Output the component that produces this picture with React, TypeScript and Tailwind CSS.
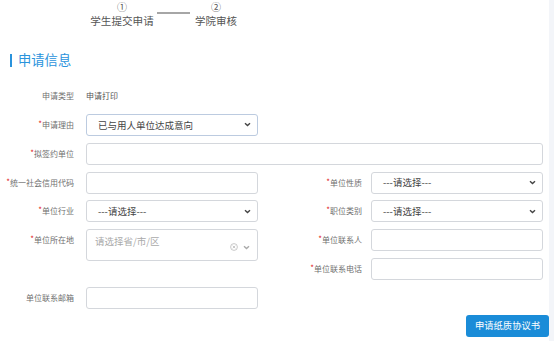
import React from "react";

const Chevron = ({ color = "#444" }: { color?: string }) => (
  <svg width="7" height="5" viewBox="0 0 7 5" fill="none">
    <path d="M1 1.2 L3.5 3.6 L6 1.2" stroke={color} strokeWidth="1.4" />
  </svg>
);

const Label = ({ text, req, right }: { text: string; req?: boolean; right?: boolean }) => (
  <div
    className={`flex items-center justify-end text-[8px] text-[#707070] whitespace-nowrap ${
      right ? "pr-[9px]" : "pr-[12px]"
    }`}
  >
    {req && <span className="text-[#e02020] -mt-[2px]">*</span>}
    {text}
  </div>
);

const Input = ({ className = "" }: { className?: string }) => (
  <div className={`h-[22px] border border-[#d4d7dc] rounded-[3px] bg-white ${className}`} />
);

const Select = ({ value, blue }: { value: string; blue?: boolean }) => (
  <div
    className={`h-[22px] border rounded-[3px] bg-white flex items-center justify-between pl-[11px] pr-[6px] text-[9.5px] text-[#444] ${
      blue ? "border-[#bccbe0]" : "border-[#d4d7dc]"
    }`}
  >
    <span>{value}</span>
    <Chevron />
  </div>
);

const App = () => {
  return (
    <div className="flex w-[554px] h-[341px] overflow-hidden bg-white font-['Noto_Sans_CJK_SC','Microsoft_YaHei',sans-serif]">
      <div className="flex-1 flex flex-col">

        {/* steps */}
        <div className="flex items-center pl-[90px] pt-[1px] h-[26px] text-[#555]">
          <div className="flex flex-col items-center gap-[3px] w-[64px]">
            <span className="text-[10px] leading-[10px]">①</span>
            <span className="text-[10.6px] leading-[11px] whitespace-nowrap">学生提交申请</span>
          </div>
          <div className="w-[33px] h-[2px] bg-[#a6a6a6] ml-[3px] -mt-[1px]" />
          <div className="flex flex-col items-center gap-[3px] w-[42px] ml-[5px]">
            <span className="text-[10px] leading-[10px]">②</span>
            <span className="text-[10.5px] leading-[11px] whitespace-nowrap">学院审核</span>
          </div>
        </div>

        {/* section title */}
        <div className="flex items-center h-[14px] mt-[27px] pl-[10px]">
          <div className="w-[2px] h-[13px] bg-[#2a93dc]" />
          <span className="ml-[6px] text-[13.3px] leading-[14px] text-[#2a93dc]">申请信息</span>
        </div>

        {/* form */}
        <div className="grid grid-cols-[86px_172px_113px_172px] auto-rows-[22px] gap-y-[6.85px] mt-[18px]">
          <Label text="申请类型" />
          <div className="col-span-3 flex items-center text-[8px] text-[#555]">申请打印</div>

          <Label text="申请理由" req />
          <Select value="已与用人单位达成意向" blue />
          <div className="col-span-2" />

          <Label text="拟签约单位" req />
          <Input className="col-span-3" />

          <Label text="统一社会信用代码" req />
          <Input />
          <Label text="单位性质" req right />
          <Select value="---请选择---" />

          <Label text="单位行业" req />
          <Select value="---请选择---" />
          <Label text="职位类别" req right />
          <Select value="---请选择---" />

          <Label text="单位所在地" req />
          <div className="row-span-2 self-start h-[32px] border border-[#d4d7dc] rounded-[3px] bg-white flex justify-between pl-[8px] pr-[7px] pt-[5px]">
            <span className="text-[9.5px] leading-[12px] text-[#aaa]">请选择省/市/区</span>
            <div className="flex items-center gap-[5px] mt-[8px] h-[8px]">
              <svg width="8" height="8" viewBox="0 0 8 8" fill="none">
                <circle cx="4" cy="4" r="3.4" stroke="#bbb" strokeWidth="0.8" />
                <path d="M2.7 2.7 L5.3 5.3 M5.3 2.7 L2.7 5.3" stroke="#bbb" strokeWidth="0.8" />
              </svg>
              <Chevron color="#aaa" />
            </div>
          </div>
          <Label text="单位联系人" req right />
          <Input />

          <div />
          <Label text="单位联系电话" req right />
          <Input />

          <Label text="单位联系邮箱" />
          <Input />
        </div>

        <div className="flex justify-end mt-[6px]">
          <button className="h-[22px] w-[83px] rounded-[3px] bg-[#1a8cd8] text-white text-[9.3px]">
            申请纸质协议书
          </button>
        </div>
      </div>

      <div className="w-[5px] bg-[#f3f5f9]" />
    </div>
  );
};

export default App;
